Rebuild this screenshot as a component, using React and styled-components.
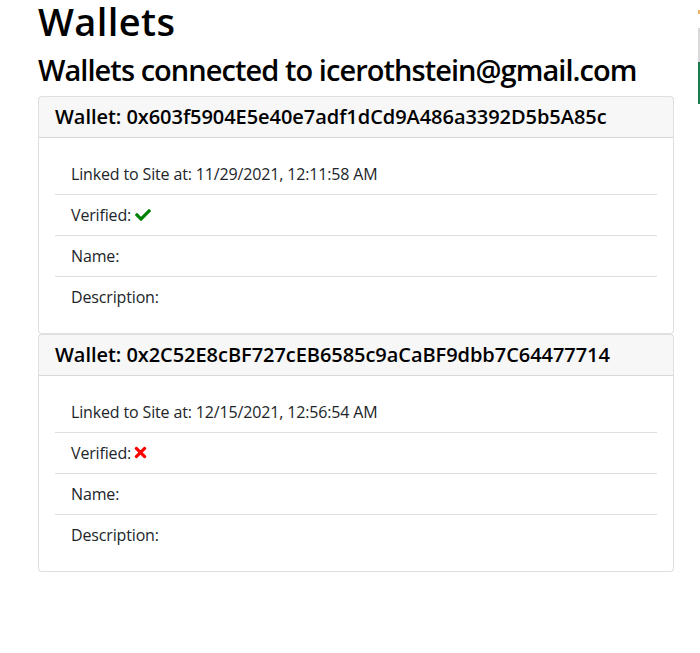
import React from 'react';
import styled, { createGlobalStyle } from 'styled-components';
import { FaCheck, FaTimes } from 'react-icons/fa';

const wallets = [
  {
    address: '0x603f5904E5e40e7adf1dCd9A486a3392D5b5A85c',
    linked: '11/29/2021, 12:11:58 AM',
    verified: true,
  },
  {
    address: '0x2C52E8cBF727cEB6585c9aCaBF9dbb7C64477714',
    linked: '12/15/2021, 12:56:54 AM',
    verified: false,
  },
];

function App() {
  return (
    <>
      <GlobalStyle />
      <Page>
        <Title>Wallets</Title>
        <SubTitle>Wallets connected to icerothstein@gmail.com</SubTitle>
        {wallets.map((w) => (
          <Card key={w.address}>
            <CardHeader>
              <h5>Wallet: {w.address}</h5>
            </CardHeader>
            <CardBody>
              <ListGroup>
                <Item>Linked to Site at: {w.linked}</Item>
                <Item>
                  Verified:{' '}
                  <Mark $ok={w.verified}>{w.verified ? <FaCheck /> : <FaTimes />}</Mark>
                </Item>
                <Item>Name:</Item>
                <Item>Description:</Item>
              </ListGroup>
            </CardBody>
          </Card>
        ))}
      </Page>
      <EdgeSliver>
        <span className="o" />
        <span className="g" />
        <span className="gr" />
      </EdgeSliver>
    </>
  );
}

const GlobalStyle = createGlobalStyle`
  body {
    margin: 0;
    background: #fff;
    font-family: "Open Sans", "Noto Sans", sans-serif;
    color: #212529;
  }
`;

const Page = styled.div`
  padding: 0 0 0 38px;
  width: 636px;
`;

const Title = styled.h1`
  font-size: 38px;
  font-weight: 600;
  line-height: 1.15;
  letter-spacing: 0.4px;
  margin: 0 0 9px;
  color: #000;
`;

const SubTitle = styled.h2`
  font-size: 29px;
  font-weight: 600;
  line-height: 1.2;
  letter-spacing: -0.95px;
  white-space: nowrap;
  margin: 0 0 9px;
  color: #000;
`;

const Card = styled.div`
  border: 1px solid rgba(0, 0, 0, 0.125);
  border-radius: 4px;
  background: #fff;
`;

const CardHeader = styled.div`
  padding: 8px 16px;
  background: rgba(0, 0, 0, 0.03);
  border-bottom: 1px solid rgba(0, 0, 0, 0.125);
  h5 {
    margin: 0;
    font-size: 20px;
    font-weight: 600;
    line-height: 1.2;
    letter-spacing: -0.05px;
    color: #000;
  }
`;

const CardBody = styled.div`
  padding: 16px;
`;

const ListGroup = styled.ul`
  list-style: none;
  margin: 0;
  padding: 0;
`;

const Item = styled.li`
  padding: 8px 16px;
  font-size: 16px;
  line-height: 24px;
  letter-spacing: -0.15px;
  border-bottom: 1px solid rgba(0, 0, 0, 0.125);
  &:last-child {
    border-bottom: 0;
  }
`;

const Mark = styled.span`
  color: ${(p) => (p.$ok ? '#008000' : '#ff0000')};
  font-size: ${(p) => (p.$ok ? '16px' : '17px')};
  margin-left: ${(p) => (p.$ok ? '0' : '-3px')};
  svg {
    vertical-align: -2px;
  }
`;

const EdgeSliver = styled.div`
  position: fixed;
  top: 0;
  right: 0;
  width: 2px;
  height: 106px;
  display: flex;
  flex-direction: column;
  .o { height: 4px; margin-top: 10px; background: #f0b060; }
  .g { height: 34px; margin-top: 14px; background: #d8d8d8; }
  .gr { height: 42px; background: #1e7a4a; }
`;

export default App;
